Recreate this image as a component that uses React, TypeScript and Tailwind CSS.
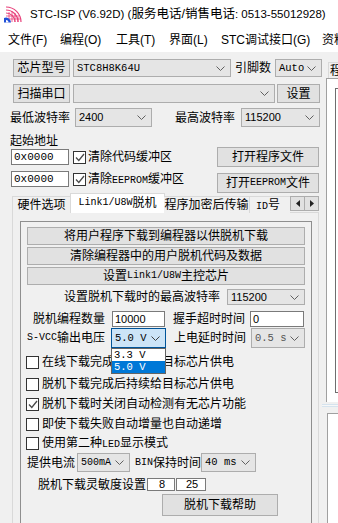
import React from "react";

const sans = "font-['Liberation_Sans','Noto_Sans_CJK_SC',sans-serif]";
const mono = "font-['Liberation_Mono','Noto_Sans_CJK_SC',monospace]";

function Chevron({ color = "#606060" }: { color?: string }) {
  return (
    <svg width="9" height="5" viewBox="0 0 9 5" className="shrink-0">
      <path d="M0.5 0.5 L4.5 4.5 L8.5 0.5" fill="none" stroke={color} strokeWidth="1" />
    </svg>
  );
}

function Btn({ className = "", children }: { className?: string; children: React.ReactNode }) {
  return (
    <div
      className={`flex items-center justify-center border border-[#adadad] bg-[#e1e1e1] text-[12px] leading-none text-black ${className}`}
    >
      {children}
    </div>
  );
}

function Combo({
  className = "",
  children,
  textClass = "",
}: {
  className?: string;
  children: React.ReactNode;
  textClass?: string;
}) {
  return (
    <div
      className={`flex items-center justify-between border border-[#adadad] bg-[#e5e5e5] pl-[3px] pr-[5px] leading-none ${className}`}
    >
      <span className={`whitespace-nowrap ${textClass}`}>{children}</span>
      <Chevron />
    </div>
  );
}

function TextBox({ className = "", children }: { className?: string; children?: React.ReactNode }) {
  return (
    <div className={`flex items-center border border-[#7a7a7a] bg-white pl-[2px] text-[11px] leading-none ${className}`}>
      {children}
    </div>
  );
}

function Check({ checked = false }: { checked?: boolean }) {
  return (
    <div className="flex h-[13px] w-[13px] shrink-0 items-center justify-center border border-[#333333] bg-white">
      {checked ? (
        <svg width="10" height="9" viewBox="0 0 10 9">
          <path d="M1 4.5 L3.8 7.5 L9 1" fill="none" stroke="#4a4a4a" strokeWidth="1.3" />
        </svg>
      ) : null}
    </div>
  );
}

function CheckRow({ checked, label, className = "" }: { checked?: boolean; label: React.ReactNode; className?: string }) {
  return (
    <div className={`flex h-[20px] items-center pl-[5px] ${className}`}>
      <Check checked={checked} />
      <span className="ml-[3px] whitespace-nowrap text-[12px] leading-none">{label}</span>
    </div>
  );
}

function StcIcon() {
  return (
    <svg width="20" height="17" viewBox="0 0 20 17">
      <g fill="none" stroke="#e8407a" strokeWidth="1.2">
        <path d="M3 7 A9 9 0 0 1 12 16" />
        <path d="M3 4 A12 12 0 0 1 15 16" />
        <path d="M3 1 A15 15 0 0 1 18 16" />
        <path d="M6 6 V16 M9 5 V16 M12 7 V16 M15 9 V16" strokeWidth="0.8" />
        <path d="M3 10 H14 M3 13 H17" strokeWidth="0.8" />
      </g>
      <path d="M1 16.5 V12 A5 5 0 0 1 8 16.5 Z" fill="#1f4fd8" />
      <path d="M3 16.5 V14 A2.5 2.5 0 0 1 5.5 16.5 Z" fill="#ffffff" />
    </svg>
  );
}

export default function App() {
  return (
    <div className={`h-[523px] w-[338px] overflow-hidden bg-[#f0f0f0] text-black ${sans}`}>
      {/* title bar */}
      <div className="flex h-[28px] items-center bg-white">
        <div className="ml-[3px] mt-[1px]">
          <StcIcon />
        </div>
        <span className="ml-[7px] whitespace-nowrap text-[11.5px] leading-none">
          STC-ISP (V6.92D) (<span className="text-[12.5px]">服务电话/销售电话</span>: 0513-55012928)
        </span>
      </div>

      {/* menu bar */}
      <div className="flex h-[24px] items-center bg-white pl-[8px] text-[12px] leading-none">
        <span className="w-[52px] shrink-0">文件(F)</span>
        <span className="w-[56px] shrink-0">编程(O)</span>
        <span className="w-[53px] shrink-0">工具(T)</span>
        <span className="w-[52px] shrink-0">界面(L)</span>
        <span className="w-[101px] shrink-0">STC调试接口(G)</span>
        <span className="shrink-0 whitespace-nowrap">资料</span>
      </div>

      <div className="flex h-[471px]">
        {/* left panel */}
        <div className="flex w-[322px] shrink-0 flex-col">
          <div className="mt-[7px] flex h-[18px] items-stretch">
            <Btn className="ml-[13px] w-[57px]">芯片型号</Btn>
            <Combo className="ml-[3px] w-[158px]" textClass={`${mono} text-[10.5px]`}>
              STC8H8K64U
            </Combo>
            <span className="ml-[4px] flex w-[37px] items-center text-[12px] leading-none">引脚数</span>
            <Combo className="ml-[3px] w-[47px]" textClass={`${mono} text-[10.5px]`}>
              Auto
            </Combo>
          </div>

          <div className="mt-[7px] flex h-[19px] items-stretch">
            <Btn className="ml-[13px] w-[57px]">扫描串口</Btn>
            <Combo className="ml-[3px] w-[202px]">{""}</Combo>
            <Btn className="ml-[2px] w-[43px]">设置</Btn>
          </div>

          <div className="mt-[5px] flex h-[19px] items-stretch">
            <span className="ml-[10px] flex w-[63px] items-center text-[12px] leading-none">最低波特率</span>
            <Combo className="ml-[2px] w-[77px]" textClass="text-[11px]">
              2400
            </Combo>
            <span className="ml-[23px] flex w-[62px] items-center text-[12px] leading-none">最高波特率</span>
            <Combo className="ml-[4px] w-[79px]" textClass="text-[11px]">
              115200
            </Combo>
          </div>

          <div className="ml-[10px] mt-[9px] h-[11px] text-[12px] leading-[11px]">起始地址</div>

          <div className="flex h-[20px] items-center">
            <TextBox className={`ml-[11px] h-[16px] w-[58px] ${mono}`}>0x0000</TextBox>
            <div className="ml-[4px] flex items-center">
              <Check checked />
              <span className="ml-[2px] text-[12px] leading-none">清除代码缓冲区</span>
            </div>
            <Btn className="ml-auto mr-[3px] h-[20px] w-[102px]">打开程序文件</Btn>
          </div>

          <div className="mt-[4px] flex h-[22px] items-start">
            <TextBox className={`ml-[11px] h-[16px] w-[58px] ${mono}`}>0x0000</TextBox>
            <div className="ml-[4px] mt-[2px] flex h-[13px] items-center">
              <Check checked />
              <span className="ml-[2px] whitespace-nowrap text-[12px] leading-none">
                清除<span className={`${mono} text-[10px]`}>EEPROM</span>缓冲区
              </span>
            </div>
            <Btn className="ml-auto mr-[3px] mt-[2px] h-[20px] w-[102px]">
              打开<span className={`${mono} text-[10px]`}>EEPROM</span>文件
            </Btn>
          </div>

          {/* tabs */}
          <div className="relative z-10 ml-[12px] mt-[1px] flex h-[19px] w-[307px] items-end">
            <div className="flex h-[17px] w-[59px] shrink-0 items-center justify-center border border-b-0 border-[#d9d9d9] bg-[#f0f0f0] text-[12px] leading-none">
              硬件选项
            </div>
            <div className="-mx-[1px] flex h-[20px] w-[95px] shrink-0 items-center justify-center border border-b-0 border-[#d9d9d9] bg-white pb-[1px] text-[12px] leading-none">
              <span className={`${mono} text-[10px]`}>Link1/U8W</span>脱机
            </div>
            <div className="flex h-[17px] w-[86px] shrink-0 items-center justify-center border border-b-0 border-l-0 border-[#d9d9d9] bg-[#f0f0f0] text-[12px] leading-none">
              程序加密后传输
            </div>
            <div className="flex h-[17px] w-[40px] shrink-0 items-center overflow-hidden border-t border-[#d9d9d9] bg-[#f0f0f0] pl-[6px] text-[12px] leading-none">
              <span className="whitespace-nowrap">
                <span className={`${mono} text-[10px]`}>ID</span>号
              </span>
            </div>
            <div className="mb-[2px] flex h-[15px] self-end">
              <div className="flex h-[15px] w-[15px] items-center justify-center border border-[#adadad] bg-[#e1e1e1]">
                <svg width="4" height="7" viewBox="0 0 4 7">
                  <path d="M4 0 L0 3.5 L4 7 Z" fill="#222" />
                </svg>
              </div>
              <div className="-ml-[1px] flex h-[15px] w-[15px] items-center justify-center border border-[#adadad] bg-[#e1e1e1]">
                <svg width="4" height="7" viewBox="0 0 4 7">
                  <path d="M0 0 L4 3.5 L0 7 Z" fill="#222" />
                </svg>
              </div>
            </div>
          </div>

          {/* tab page */}
          <div className="-mt-[1px] ml-[12px] flex w-[307px] flex-1 flex-col border border-b-0 border-[#d9d9d9] bg-[#f0f0f0]">
            <div className="ml-[7px] mt-[8px] flex w-[292px] flex-1 flex-col border border-b-0 border-[#8e8e8e]">
              <Btn className="ml-[6px] mt-[5px] h-[18px] w-[278px]">将用户程序下载到编程器以供脱机下载</Btn>
              <Btn className="ml-[6px] mt-[2px] h-[18px] w-[278px]">清除编程器中的用户脱机代码及数据</Btn>
              <Btn className="ml-[6px] mt-[2px] h-[18px] w-[278px]">
                设置<span className={`${mono} text-[10px]`}>Link1/U8W</span>主控芯片
              </Btn>

              <div className="mt-[4px] flex h-[16px] items-stretch justify-end pr-[6px]">
                <span className="flex items-center text-[12px] leading-none">设置脱机下载时的最高波特率</span>
                <Combo className="ml-[7px] w-[78px]" textClass="text-[11px]">
                  115200
                </Combo>
              </div>

              <div className="mt-[6px] flex h-[16px] items-stretch">
                <span className="ml-[6px] flex w-[78px] items-center justify-end text-[12px] leading-none">脱机编程数量</span>
                <TextBox className="ml-[7px] w-[53px]">10000</TextBox>
                <span className="ml-[7px] flex w-[73px] items-center justify-end text-[12px] leading-none">握手超时时间</span>
                <TextBox className="ml-[5px] w-[54px]">0</TextBox>
              </div>

              <div className="mt-[1px] flex h-[20px] items-stretch">
                <span className="ml-[6px] flex w-[78px] items-center justify-end whitespace-nowrap text-[12px] leading-none">
                  <span className={`${mono} text-[10px]`}>S-VCC</span>输出电压
                </span>
                <div className="relative z-20 ml-[6px] w-[55px]">
                  <div className="flex h-full items-center justify-between border border-[#005499] bg-[#cce4f7] pl-[3px] pr-[5px]">
                    <span className={`${mono} text-[10.5px] leading-none`}>5.0 V</span>
                    <Chevron color="#404040" />
                  </div>
                  <div className={`absolute left-0 top-full w-[55px] border border-[#646464] bg-white ${mono} text-[10.5px]`}>
                    <div className="h-[12px] pl-[2px] leading-[12px]">3.3 V</div>
                    <div className="h-[12px] bg-[#0078d7] pl-[2px] leading-[12px] text-white">5.0 V</div>
                  </div>
                </div>
                <span className="ml-[7px] flex w-[73px] items-center justify-end text-[12px] leading-none">上电延时时间</span>
                <Combo className="ml-[5px] w-[54px]" textClass={`${mono} text-[10.5px] text-[#555555]`}>
                  0.5 s
                </Combo>
              </div>

              <CheckRow className="mt-[4px]" label="在线下载完成后持续给目标芯片供电" />
              <CheckRow className="mt-[2px]" label="脱机下载完成后持续给目标芯片供电" />
              <CheckRow checked label="脱机下载时关闭自动检测有无芯片功能" />
              <CheckRow label="即使下载失败自动增量也自动递增" />
              <CheckRow
                className="!h-[19px]"
                label={
                  <>
                    使用第二种<span className={`${mono} text-[10px]`}>LED</span>显示模式
                  </>
                }
              />

              <div className="flex h-[19px] items-stretch">
                <span className="ml-[6px] flex w-[49px] items-center text-[12px] leading-none">提供电流</span>
                <Combo className="ml-[1px] w-[53px]" textClass={`${mono} text-[10px]`}>
                  500mA
                </Combo>
                <span className="ml-[5px] flex w-[65px] items-center whitespace-nowrap text-[12px] leading-none">
                  <span className={`${mono} text-[10px]`}>BIN</span>保持时间
                </span>
                <Combo className="ml-[1px] w-[55px]" textClass={`${mono} text-[10.5px]`}>
                  40 ms
                </Combo>
              </div>

              <div className="mt-[6px] flex h-[13px] items-stretch">
                <span className="ml-[17px] flex w-[108px] items-center text-[12px] leading-none">脱机下载灵敏度设置</span>
                <TextBox className="ml-[1px] w-[28px] justify-center pl-0">8</TextBox>
                <TextBox className="ml-[1px] w-[30px] justify-center pl-0">25</TextBox>
              </div>

              <Btn className="ml-[141px] mt-[3px] h-[22px] w-[116px]">脱机下载帮助</Btn>
            </div>
          </div>
        </div>

        {/* right panel */}
        <div className="flex flex-1 flex-col">
          <div className="ml-[6px] mt-[10px] flex h-[16px] items-center overflow-hidden border border-b-0 border-r-0 border-[#d9d9d9] pl-[1px] text-[12px] leading-none">
            <span className="whitespace-nowrap">程序</span>
          </div>
          <div className="ml-[4px] flex h-[324px] flex-col border-l border-t border-[#a0a0a0] bg-white">
            <div className="ml-[8px] mt-[9px] h-[305px] border-b border-l border-t border-[#6e6e6e] bg-white" />
          </div>
          <div className="mt-[2px] h-[3px] border-t border-b border-[#d5e3ee] bg-[#f7f7f7]" />
          <div className="ml-[5px] mt-[6px] flex-1 border-l border-t border-[#a0a0a0] bg-white" />
        </div>
      </div>
    </div>
  );
}
